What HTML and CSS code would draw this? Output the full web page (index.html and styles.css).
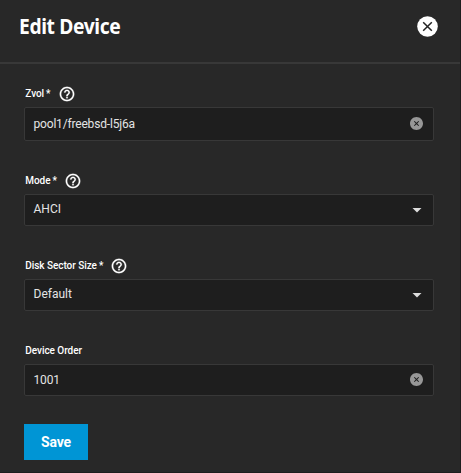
FILE: index.html
```html
<!DOCTYPE html>
<html lang="en">
<head>
<meta charset="utf-8">
<title>Edit Device</title>
<link rel="stylesheet" href="styles.css">
</head>
<body>
<svg width="0" height="0" class="defs">
  <symbol id="help" viewBox="1 1 22 22"><path d="M11 18h2v-2h-2v2zm1-16C6.48 2 2 6.48 2 12s4.480 10 10 10 10-4.480 10-10S17.520 2 12 2zm0 18c-4.410 0-8-3.590-8-8s3.590-8 8-8 8 3.590 8 8-3.590 8-8 8zm0-14c-2.210 0-4 1.790-4 4h2c0-1.100.9-2 2-2s2 .9 2 2c0 2-3 1.750-3 5h2c0-2.250 3-2.500 3-5 0-2.210-1.790-4-4-4z"/></symbol>
  <symbol id="cancel" viewBox="2 2 20 20"><path d="M12 2C6.470 2 2 6.470 2 12s4.470 10 10 10 10-4.470 10-10S17.530 2 12 2zm4 12.900L14.900 16 12 13.100 9.100 16 8 14.900 10.900 12 8 9.100 9.100 8 12 10.900 14.900 8 16 9.100 13.100 12 16 14.900z"/></symbol>
</svg>
<main class="panel">
  <header class="header">
    <h1 class="title">Edit Device</h1>
    <svg class="close" viewBox="0 0 21 21"><circle cx="10.500" cy="10.500" r="10.300"/><path d="M6.200 6.200l8.600 8.600M14.800 6.200l-8.600 8.600"/></svg>
  </header>
  <form class="form">
    <div class="field first">
      <div class="label"><span>Zvol<i class="star">*</i></span><svg class="help"><use href="#help"/></svg></div>
      <div class="control"><span class="value">pool1/freebsd-l5j6a</span><svg class="clear"><use href="#cancel"/></svg></div>
    </div>
    <div class="field select">
      <div class="label"><span>Mode<i class="star">*</i></span><svg class="help"><use href="#help"/></svg></div>
      <div class="control"><span>AHCI</span><i class="arrow"></i></div>
    </div>
    <div class="field select">
      <div class="label"><span>Disk Sector Size<i class="star">*</i></span><svg class="help"><use href="#help"/></svg></div>
      <div class="control"><span>Default</span><i class="arrow"></i></div>
    </div>
    <div class="field last">
      <div class="label"><span>Device Order</span></div>
      <div class="control"><span class="value">1001</span><svg class="clear"><use href="#cancel"/></svg></div>
    </div>
    <button class="save" type="button">Save</button>
  </form>
</main>
</body>
</html>
```
FILE: styles.css
```css
* { box-sizing: border-box; }
body { margin: 0; background: #282828; color: #fff; font-family: Roboto, "Liberation Sans", sans-serif; }
.defs { display: block; }
.panel { height: 473px; border-right: 1px solid #1e1e1e; border-bottom: 1px solid #1e1e1e; overflow: hidden; }
.header { display: flex; justify-content: space-between; align-items: flex-start; height: 64px; padding: 16px 22px 0 19px; border-bottom: 2px solid #383838; }
.title { margin: 0; font: 700 20.500px/20px "Noto Sans", sans-serif; letter-spacing: -0.400px; transform: scaleX(0.94); transform-origin: left; }
.close { width: 21px; height: 21px; fill: #fff; }
.close path { stroke: #222; stroke-width: 1.500; fill: none; }
.form { padding: 20px 26px 0 24px; }
.field { height: 85px; }
.field.first { height: 87px; }
.field.last { height: 55px; }
.label { display: flex; align-items: center; height: 23px; padding: 0 0 4px 1.300px; font-size: 10px; font-weight: 500; line-height: 13px; white-space: nowrap; letter-spacing: -0.050px; }
.star { font-style: normal; margin-left: 2px; }
.help { width: 16px; height: 16px; margin-left: 8px; margin-top: 1px; fill: #fff; stroke: #fff; stroke-width: 0.300; }
.control { display: flex; align-items: center; justify-content: space-between; height: 32px; padding: 0 10px 0 8.500px; border: 1px solid #383838; border-radius: 2px; background: #1e1e1e; color: #e4e4e4; font-size: 12px; line-height: 16px; }
.value { letter-spacing: -0.180px; }
.first .control { height: 34px; }
.select .control { padding-bottom: 2px; }
.clear { width: 13px; height: 13px; margin-bottom: 1px; fill: #979797; }
.arrow { width: 10px; height: 5px; margin: 2px 1px 0 0; background: #ddd; clip-path: polygon(0 0, 100% 0, 50% 100%); }
.save { display: block; width: 64px; height: 36px; margin-top: 28px; padding: 0; border: 0; background: #0095d5; color: #fff; font: 700 14px/36px Roboto, sans-serif; letter-spacing: -0.200px; }
```
